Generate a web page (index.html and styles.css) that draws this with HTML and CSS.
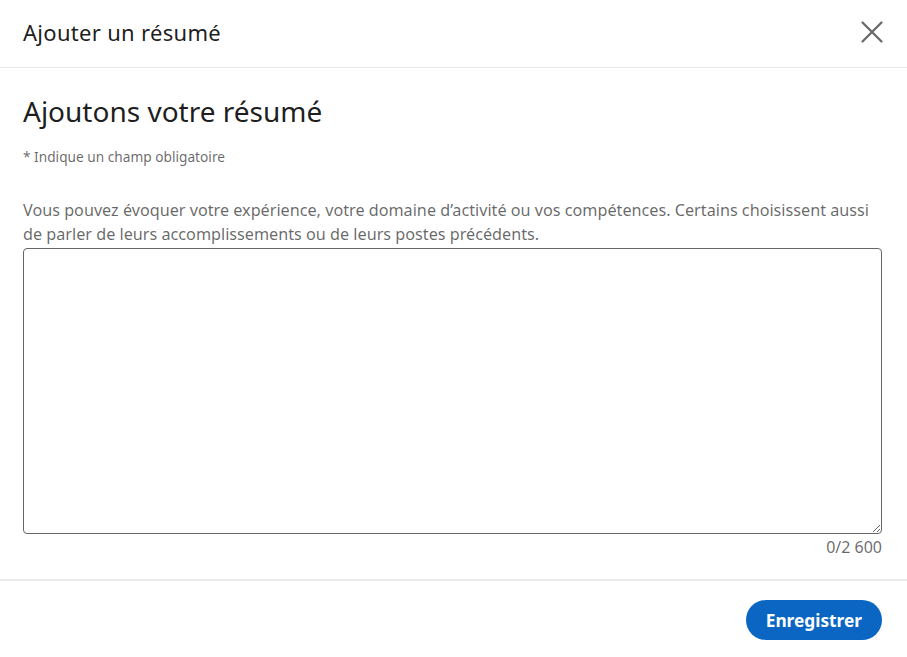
FILE: index.html
```html
<!DOCTYPE html>
<html lang="fr">
<head>
<meta charset="utf-8">
<title>Ajouter un résumé</title>
<link rel="stylesheet" href="styles.css">
</head>
<body>
<div class="modal">
  <header class="modal-header">
    <h1 class="modal-title">Ajouter un résumé</h1>
    <button class="close-btn" aria-label="Fermer">
      <svg width="24" height="24" viewBox="0 0 24 24"><path d="M2.5 2.5 L21.5 21.5 M21.5 2.5 L2.5 21.5" stroke="#666" stroke-width="2.2" stroke-linecap="round" fill="none"/></svg>
    </button>
  </header>
  <main class="modal-body">
    <h2 class="heading">Ajoutons votre résumé</h2>
    <p class="required">* Indique un champ obligatoire</p>
    <p class="hint">Vous pouvez évoquer votre expérience, votre domaine d’activité ou vos compétences. Certains choisissent aussi de parler de leurs accomplissements ou de leurs postes précédents.</p>
    <textarea class="summary"></textarea>
    <div class="counter">0/2 600</div>
  </main>
  <footer class="modal-footer">
    <button class="save-btn">Enregistrer</button>
  </footer>
</div>
</body>
</html>
```
FILE: styles.css
```css
html, body {
  margin: 0;
  padding: 0;
  background: #fff;
}
body {
  font-family: "Noto Sans", "Open Sans", sans-serif;
  color: rgba(0,0,0,0.9);
}
.modal {
  width: 907px;
  height: 657px;
  display: flex;
  flex-direction: column;
}
.modal-header {
  height: 68px;
  box-sizing: border-box;
  border-bottom: 1px solid #e6e6e6;
  display: flex;
  align-items: center;
  justify-content: space-between;
  padding: 0 23px 3px 23px;
}
.modal-title {
  margin: 0;
  font-size: 22px;
  letter-spacing: 0.3px;
  font-weight: 400;
  color: rgba(0,0,0,0.9);
}
.close-btn {
  background: none;
  border: 0;
  padding: 0;
  width: 24px;
  height: 24px;
  display: flex;
}
.modal-body {
  padding: 0 25px 0 23px;
  display: flex;
  flex-direction: column;
}
.heading {
  margin: 23px 0 0;
  font-size: 28px;
  font-weight: 400;
  line-height: 40px;
  color: rgba(0,0,0,0.9);
}
.required {
  margin: 17px 0 0;
  font-size: 13.7px;
  line-height: 18px;
  color: rgba(0,0,0,0.6);
}
.hint {
  margin: 32px 0 0;
  font-size: 16.2px;
  line-height: 24px;
  color: rgba(0,0,0,0.6);
}
.summary {
  margin: 2px 0 0;
  height: 286px;
  box-sizing: border-box;
  border: 1px solid #666;
  border-radius: 4px;
  resize: vertical;
}
.counter {
  text-align: right;
  font-size: 16px;
  line-height: 26px;
  color: rgba(0,0,0,0.6);
}
.modal-footer {
  margin-top: 19px;
  border-top: 2px solid #ebebeb;
  display: flex;
  justify-content: flex-end;
  padding: 19px 25px 0 0;
}
.save-btn {
  background: #0a66c2;
  color: #fff;
  border: 0;
  border-radius: 20px;
  height: 40px;
  padding: 0 20px;
  font-family: "Noto Sans", "Open Sans", sans-serif;
  font-size: 17.3px;
  font-weight: 700;
}
```
